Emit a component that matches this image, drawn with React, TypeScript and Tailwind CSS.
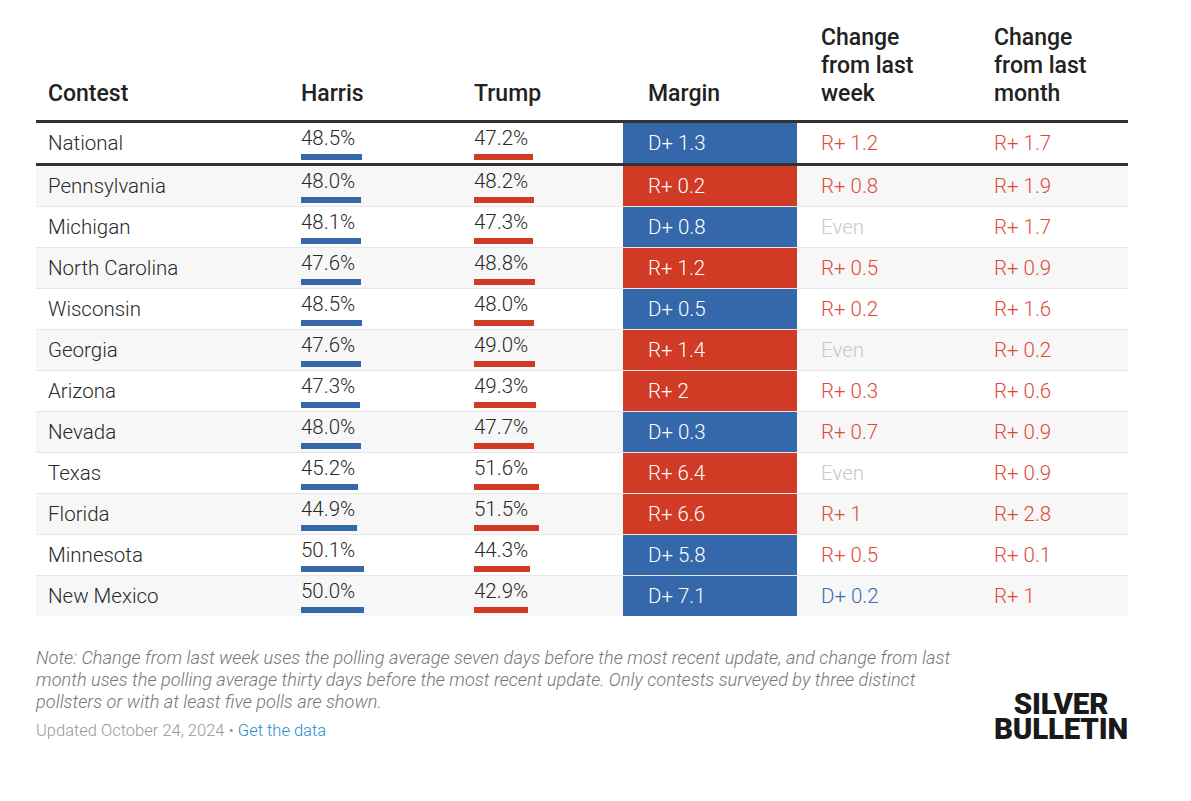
import React from "react";

type Row = {
  name: string;
  harris: number;
  trump: number;
  margin: string;
  week: string;
  month: string;
};

const national: Row = { name: "National", harris: 48.5, trump: 47.2, margin: "D+ 1.3", week: "R+ 1.2", month: "R+ 1.7" };

const states: Row[] = [
  { name: "Pennsylvania", harris: 48.0, trump: 48.2, margin: "R+ 0.2", week: "R+ 0.8", month: "R+ 1.9" },
  { name: "Michigan", harris: 48.1, trump: 47.3, margin: "D+ 0.8", week: "Even", month: "R+ 1.7" },
  { name: "North Carolina", harris: 47.6, trump: 48.8, margin: "R+ 1.2", week: "R+ 0.5", month: "R+ 0.9" },
  { name: "Wisconsin", harris: 48.5, trump: 48.0, margin: "D+ 0.5", week: "R+ 0.2", month: "R+ 1.6" },
  { name: "Georgia", harris: 47.6, trump: 49.0, margin: "R+ 1.4", week: "Even", month: "R+ 0.2" },
  { name: "Arizona", harris: 47.3, trump: 49.3, margin: "R+ 2", week: "R+ 0.3", month: "R+ 0.6" },
  { name: "Nevada", harris: 48.0, trump: 47.7, margin: "D+ 0.3", week: "R+ 0.7", month: "R+ 0.9" },
  { name: "Texas", harris: 45.2, trump: 51.6, margin: "R+ 6.4", week: "Even", month: "R+ 0.9" },
  { name: "Florida", harris: 44.9, trump: 51.5, margin: "R+ 6.6", week: "R+ 1", month: "R+ 2.8" },
  { name: "Minnesota", harris: 50.1, trump: 44.3, margin: "D+ 5.8", week: "R+ 0.5", month: "R+ 0.1" },
  { name: "New Mexico", harris: 50.0, trump: 42.9, margin: "D+ 7.1", week: "D+ 0.2", month: "R+ 1" },
];

const cols = "grid grid-cols-[253px_173px_161px_174px_185px_146px]";

function changeColor(v: string) {
  if (v === "Even") return "text-[#c8c8c8]";
  if (v.startsWith("D")) return "text-[#3a6cb0]";
  return "text-[#de4a37]";
}

function Pct({ value, bar }: { value: number; bar: string }) {
  return (
    <div className="pl-3 pt-[5px] flex flex-col">
      <div className="leading-[20px]">{value.toFixed(1)}%</div>
      <div className={`mt-[6px] h-[6px] ${bar}`} style={{ width: `${value * 1.255}px` }} />
    </div>
  );
}

function TableRow({ r, shaded, border }: { r: Row; shaded: boolean; border: string }) {
  const dem = r.margin.startsWith("D");
  return (
    <div className={`${cols} h-[40px] box-content ${shaded ? "bg-[#f7f7f7]" : "bg-white"} ${border}`}>
      <div className="pl-3 flex items-center">{r.name}</div>
      <Pct value={r.harris} bar="bg-[#3567a9]" />
      <Pct value={r.trump} bar="bg-[#d13b26]" />
      <div className={`pl-[25px] flex items-center text-white ${dem ? "bg-[#3568aa]" : "bg-[#d13a25]"}`}>{r.margin}</div>
      <div className={`pl-[24px] flex items-center ${changeColor(r.week)}`}>{r.week}</div>
      <div className={`pl-3 flex items-center ${changeColor(r.month)}`}>{r.month}</div>
    </div>
  );
}

export default function App() {
  return (
    <div className="min-h-screen bg-white text-[#222] font-['Roboto',sans-serif]">
      <div className="w-[1092px] ml-[36px] pt-[24px]">
        {/* header */}
        <div className={`${cols} items-end pb-[12px] border-b-[3px] border-[#333] text-[23px] font-medium leading-[28px] text-[#222]`}>
          <div className="pl-3">Contest</div>
          <div className="pl-3">Harris</div>
          <div className="pl-3">Trump</div>
          <div className="pl-[25px]">Margin</div>
          <div className="pl-[24px]">Change<br />from last<br />week</div>
          <div className="pl-3">Change<br />from last<br />month</div>
        </div>

        <div className="text-[20.5px] font-light font-['Roboto_Light','Roboto',sans-serif] text-[#2a2a2a]">
          <TableRow r={national} shaded={false} border="border-b-[3px] border-[#333]" />
          {states.map((r, i) => (
            <TableRow
              key={r.name}
              r={r}
              shaded={i % 2 === 0}
              border={i < states.length - 1 ? "border-b border-[#e6e6e6]" : ""}
            />
          ))}
        </div>

        {/* footer */}
        <div className="mt-[31px] flex items-end justify-between">
          <div className="font-light font-['Roboto_Light','Roboto',sans-serif]">
            <p className="text-[18.2px] leading-[22px] italic text-[#777]">
              Note: Change from last week uses the polling average seven days before the most recent update, and change from last
              <br />
              month uses the polling average thirty days before the most recent update. Only contests surveyed by three distinct
              <br />
              pollsters or with at least five polls are shown.
            </p>
            <p className="mt-[7px] text-[16.5px] leading-[22px] text-[#999]">
              Updated October 24, 2024 • <span className="text-[#1f8dd0]">Get the data</span>
            </p>
          </div>
          <div className="flex flex-col items-center font-black text-[29.5px] text-[#1a1a1a] tracking-[-0.2px]">
            <div className="h-[25px] leading-[25px]">SILVER</div>
            <div className="h-[25px] leading-[25px]">BULLETIN</div>
          </div>
        </div>
      </div>
    </div>
  );
}
